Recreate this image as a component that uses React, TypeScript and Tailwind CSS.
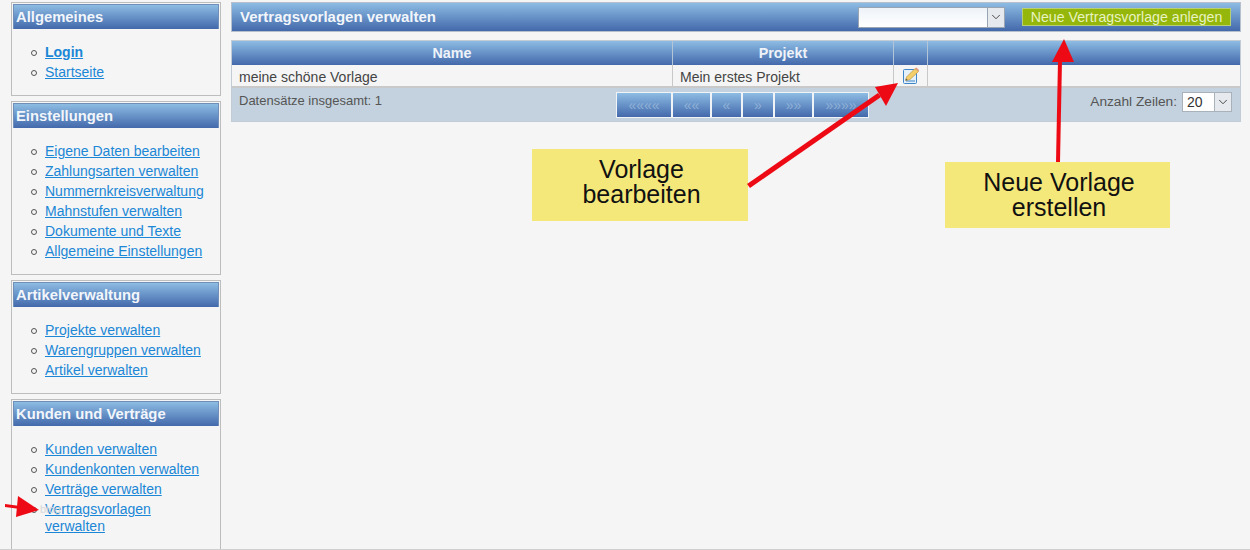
import { ChevronDown } from 'lucide-react'

const headGradient = 'bg-gradient-to-b from-[#8dbce3] to-[#4469ab]'

const menus = [
  { title: 'Allgemeines', items: ['Login', 'Startseite'] },
  {
    title: 'Einstellungen',
    items: [
      'Eigene Daten bearbeiten',
      'Zahlungsarten verwalten',
      'Nummernkreisverwaltung',
      'Mahnstufen verwalten',
      'Dokumente und Texte',
      'Allgemeine Einstellungen',
    ],
  },
  { title: 'Artikelverwaltung', items: ['Projekte verwalten', 'Warengruppen verwalten', 'Artikel verwalten'] },
  {
    title: 'Kunden und Verträge',
    items: ['Kunden verwalten', 'Kundenkonten verwalten', 'Verträge verwalten', 'Vertragsvorlagen verwalten'],
  },
]

const pager = [
  { label: '««««', w: 'w-[56px]' },
  { label: '««', w: 'w-[39px]' },
  { label: '«', w: 'w-[31px]' },
  { label: '»', w: 'w-[32px]' },
  { label: '»»', w: 'w-[39px]' },
  { label: '»»»»', w: 'w-[56px]' },
]

function Menu({ title, items }: { title: string; items: string[] }) {
  return (
    <div className="border border-[#bdbdbd] p-px pb-[14px]">
      <h2 className={`h-[25px] ${headGradient} border border-[#6f8fb8] border-b-0 pl-[2px] text-[14.8px] leading-[24px] font-bold text-[#f2f6fb]`}>
        {title}
      </h2>
      <ul className="mt-[12px] pl-[18px] w-[190px] text-[14px]">
        {items.map(item => (
          <li key={item} className="flex items-start gap-[8px] pt-[3px] leading-[17px]">
            <span className="mt-[6px] size-[6px] shrink-0 rounded-full border-[1.5px] border-[#555]" />
            <a className={`underline text-[#1b87d6] ${item === 'Login' ? 'font-bold' : ''}`}>{item}</a>
          </li>
        ))}
      </ul>
    </div>
  )
}

function Callout({ className, lines }: { className: string; lines: string[] }) {
  return (
    <div className={`absolute bg-[#f5e87a] flex flex-col items-center justify-center text-[25px] leading-[25px] text-[#111] ${className}`}>
      {lines.map(l => <span key={l}>{l}</span>)}
    </div>
  )
}

function EditIcon() {
  return (
    <svg width="16" height="17" viewBox="0 0 16 17">
      <rect x="0.5" y="2.5" width="13" height="14" rx="1" fill="#e4f0fa" stroke="#3f86c9" />
      <rect x="3" y="13" width="9" height="2" fill="#8fbbe2" />
      <path d="M2.5 13.5 L3.5 10 L12 1.5 L15.5 4.5 L7 12.5 Z" fill="#f3cf6b" stroke="#b98a3a" strokeWidth="0.6" />
      <path d="M12 1.5 L13.5 0.5 L16 3 L15.5 4.5 Z" fill="#e59a7c" />
      <path d="M2.5 13.5 L3 11.5 L4.5 13 Z" fill="#555" />
    </svg>
  )
}

export default function App() {
  return (
    <div className="relative w-[1250px] h-[550px] overflow-hidden bg-[#f5f5f5] font-['Liberation_Sans',Arial,sans-serif] border-b border-[#cfcfcf]">
      <div className="flex items-start pt-[2px]">
        {/* Sidebar */}
        <aside className="ml-[11px] w-[210px] shrink-0 flex flex-col gap-[5px]">
          {menus.map(m => <Menu key={m.title} title={m.title} items={m.items} />)}
        </aside>

        {/* Main */}
        <main className="ml-[10px] w-[1010px] shrink-0">
          <div className={`h-[30px] ${headGradient} border border-[#b5c0cc] flex items-center pl-[8px] pr-[9px]`}>
            <h1 className="text-[15px] font-bold text-[#f2f6fb]">Vertragsvorlagen verwalten</h1>
            <div className="ml-auto flex items-center h-[21px] w-[147px] border border-[#9aa5b3] bg-gradient-to-b from-[#eef3f9] to-white">
              <span className="flex-1" />
              <span className="w-[17px] h-full border-l border-[#9aa5b3] bg-[#e6e9ed] flex items-center justify-center">
                <ChevronDown size={14} strokeWidth={1.5} className="text-[#333]" />
              </span>
            </div>
            <button className="ml-[17px] h-[18px] w-[209px] bg-[#95b60b] border border-[#b9cf74] text-[14.2px] leading-[15px] text-[#e8f3c0]">
              Neue Vertragsvorlage anlegen
            </button>
          </div>

          <div className="mt-[8px] border border-[#c3ccd5] bg-[#f5f5f5]">
            <div className={`flex h-[24px] ${headGradient} text-[14.3px] leading-[24px] font-bold text-[#eef3f9]`}>
              <div className="w-[441px] text-center border-r border-[#b5c5d8]">Name</div>
              <div className="w-[221px] text-center border-r border-[#b5c5d8]">Projekt</div>
              <div className="w-[34px] border-r border-[#b5c5d8]" />
              <div className="flex-1" />
            </div>
            <div className="flex h-[21px] text-[14px] leading-[24px] text-[#444]">
              <div className="w-[441px] pl-[7px] border-r border-[#c8c8c8]">meine schöne Vorlage</div>
              <div className="w-[221px] pl-[7px] border-r border-[#c8c8c8]">Mein erstes Projekt</div>
              <div className="w-[34px] border-r border-[#c8c8c8] flex items-center justify-center">
                <EditIcon />
              </div>
              <div className="flex-1" />
            </div>
            <div className="h-[35px] bg-[#c3d2de] border-t-2 border-[#c9c9c9] flex items-start pl-[7px] pr-[8px] text-[#555]">
              <span className="mt-[4px] w-[377px] text-[13px] leading-[18px]">Datensätze insgesamt: 1</span>
              <div className="mt-[4px] flex">
                {pager.map((p, i) => (
                  <span key={i} className={`${p.w} h-[26px] border border-[#f0f4f7] ${headGradient} text-center text-[14px] leading-[24px] text-[#8fb0d6]`}>
                    {p.label}
                  </span>
                ))}
              </div>
              <div className="ml-auto mt-[4px] flex items-center">
                <span className="mr-[5px] text-[13.7px]">Anzahl Zeilen:</span>
                <div className="flex h-[20px] w-[50px] bg-white border border-[#a9b1ba]">
                  <span className="flex-1 pl-[4px] text-[14px] leading-[18px] text-[#333]">20</span>
                  <span className="w-[17px] border-l border-[#a9b1ba] bg-[#e6e9ed] flex items-center justify-center">
                    <ChevronDown size={14} strokeWidth={1.5} className="text-[#333]" />
                  </span>
                </div>
              </div>
            </div>
          </div>
        </main>
      </div>

      {/* Annotations */}
      <Callout className="left-[532px] top-[149px] w-[216px] h-[72px] pb-[7px] pl-[3px]" lines={['Vorlage', 'bearbeiten']} />
      <Callout className="left-[945px] top-[162px] w-[225px] h-[66px] pb-[1px] pl-[3px]" lines={['Neue Vorlage', 'erstellen']} />
      <span className="absolute left-[40px] top-[501px] text-[11px] text-[#d8d8d8]">blog</span>
      <svg className="absolute inset-0 pointer-events-none" width="1250" height="550">
        <g fill="#ee0a14" stroke="none">
          <path d="M747 184 L878 93 L881 97 L750 188 Z" />
          <path d="M898 83 L886 106 L875 87 Z" />
          <path d="M1056 162 L1058 60 L1062 60 L1060 162 Z" />
          <path d="M1064 39 L1074 62 L1052 62 Z" />
          <path d="M5 504 L20 506 L20 509 L5 507 Z" />
          <path d="M39 510 L18 496 L16 517 Z" />
        </g>
      </svg>
    </div>
  )
}
